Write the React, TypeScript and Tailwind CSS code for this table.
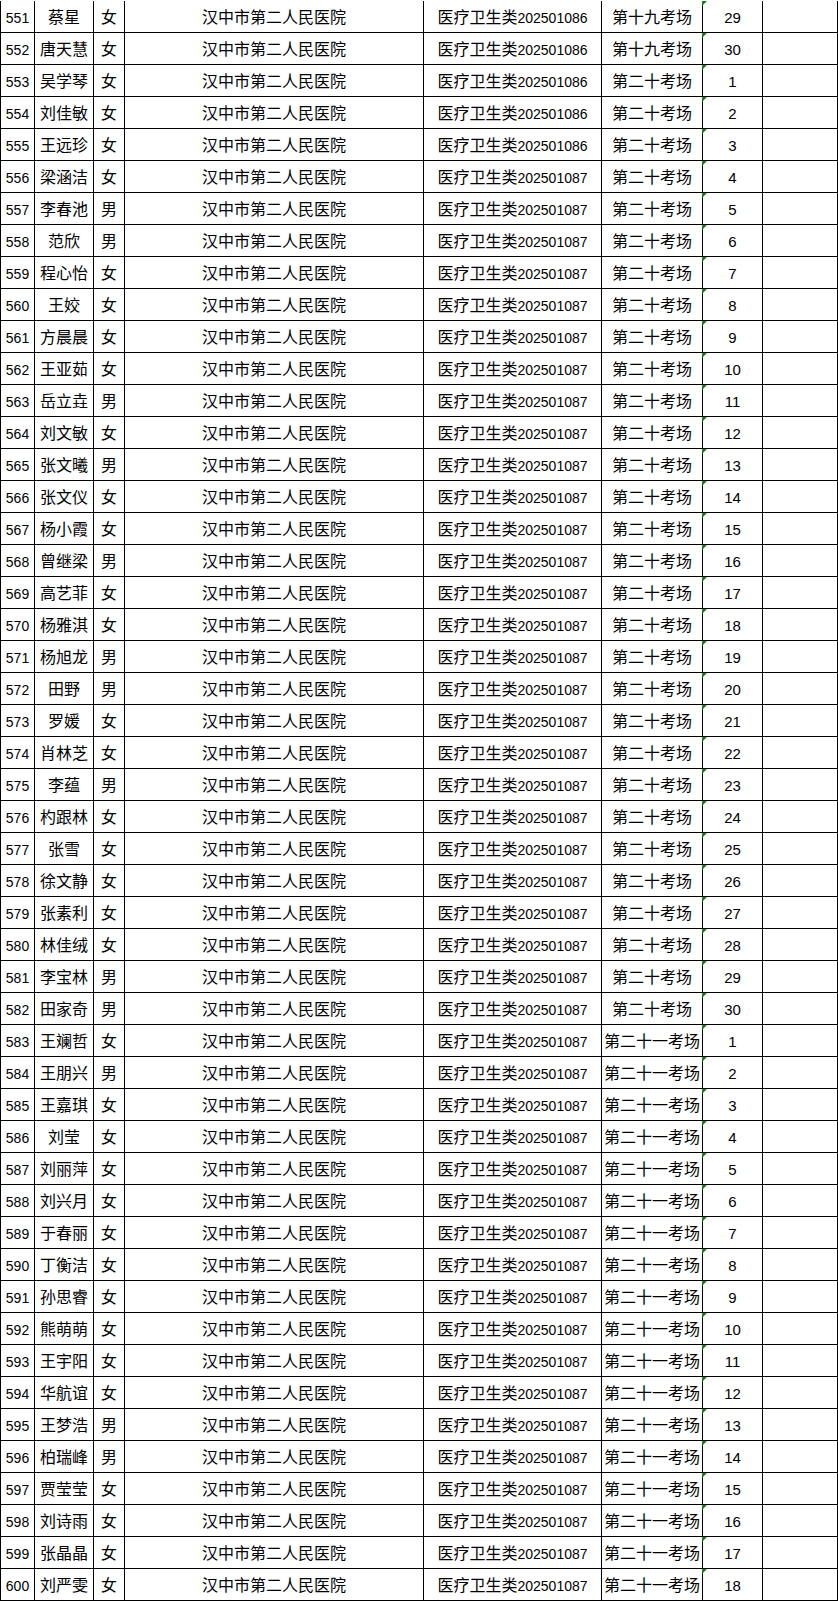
const rows: [number, string, string, string, string, number][] = [
  [551, "蔡星", "女", "202501086", "第十九考场", 29],
  [552, "唐天慧", "女", "202501086", "第十九考场", 30],
  [553, "吴学琴", "女", "202501086", "第二十考场", 1],
  [554, "刘佳敏", "女", "202501086", "第二十考场", 2],
  [555, "王远珍", "女", "202501086", "第二十考场", 3],
  [556, "梁涵洁", "女", "202501087", "第二十考场", 4],
  [557, "李春池", "男", "202501087", "第二十考场", 5],
  [558, "范欣", "男", "202501087", "第二十考场", 6],
  [559, "程心怡", "女", "202501087", "第二十考场", 7],
  [560, "王姣", "女", "202501087", "第二十考场", 8],
  [561, "方晨晨", "女", "202501087", "第二十考场", 9],
  [562, "王亚茹", "女", "202501087", "第二十考场", 10],
  [563, "岳立垚", "男", "202501087", "第二十考场", 11],
  [564, "刘文敏", "女", "202501087", "第二十考场", 12],
  [565, "张文曦", "男", "202501087", "第二十考场", 13],
  [566, "张文仪", "女", "202501087", "第二十考场", 14],
  [567, "杨小霞", "女", "202501087", "第二十考场", 15],
  [568, "曾继梁", "男", "202501087", "第二十考场", 16],
  [569, "高艺菲", "女", "202501087", "第二十考场", 17],
  [570, "杨雅淇", "女", "202501087", "第二十考场", 18],
  [571, "杨旭龙", "男", "202501087", "第二十考场", 19],
  [572, "田野", "男", "202501087", "第二十考场", 20],
  [573, "罗媛", "女", "202501087", "第二十考场", 21],
  [574, "肖林芝", "女", "202501087", "第二十考场", 22],
  [575, "李蕴", "男", "202501087", "第二十考场", 23],
  [576, "杓跟林", "女", "202501087", "第二十考场", 24],
  [577, "张雪", "女", "202501087", "第二十考场", 25],
  [578, "徐文静", "女", "202501087", "第二十考场", 26],
  [579, "张素利", "女", "202501087", "第二十考场", 27],
  [580, "林佳绒", "女", "202501087", "第二十考场", 28],
  [581, "李宝林", "男", "202501087", "第二十考场", 29],
  [582, "田家奇", "男", "202501087", "第二十考场", 30],
  [583, "王斓哲", "女", "202501087", "第二十一考场", 1],
  [584, "王朋兴", "男", "202501087", "第二十一考场", 2],
  [585, "王嘉琪", "女", "202501087", "第二十一考场", 3],
  [586, "刘莹", "女", "202501087", "第二十一考场", 4],
  [587, "刘丽萍", "女", "202501087", "第二十一考场", 5],
  [588, "刘兴月", "女", "202501087", "第二十一考场", 6],
  [589, "于春丽", "女", "202501087", "第二十一考场", 7],
  [590, "丁衡洁", "女", "202501087", "第二十一考场", 8],
  [591, "孙思睿", "女", "202501087", "第二十一考场", 9],
  [592, "熊萌萌", "女", "202501087", "第二十一考场", 10],
  [593, "王宇阳", "女", "202501087", "第二十一考场", 11],
  [594, "华航谊", "女", "202501087", "第二十一考场", 12],
  [595, "王梦浩", "男", "202501087", "第二十一考场", 13],
  [596, "柏瑞峰", "男", "202501087", "第二十一考场", 14],
  [597, "贾莹莹", "女", "202501087", "第二十一考场", 15],
  [598, "刘诗雨", "女", "202501087", "第二十一考场", 16],
  [599, "张晶晶", "女", "202501087", "第二十一考场", 17],
  [600, "刘严雯", "女", "202501087", "第二十一考场", 18],
];

export default function App() {
  return (
    <div
      className="w-[838px] bg-white pt-px text-black text-[16px] leading-none"
      style={{ fontFamily: '"Liberation Sans", "Noto Sans CJK SC", sans-serif' }}
    >
      <div className="border-l border-black">
        {rows.map(([no, name, sex, code, room, seat]) => (
          <div
            key={no}
            className="grid grid-cols-[34px_59px_31px_299px_178px_101px_60px_75px] h-[32px] border-b border-black"
          >
            {/* 序号 */}
            <div className="flex items-center justify-center pt-[2px] border-r border-black text-[14px]">
              {no}
            </div>
            {/* 姓名 */}
            <div className="flex items-center justify-center pt-[2px] border-r border-black whitespace-nowrap">
              {name}
            </div>
            {/* 性别 */}
            <div className="flex items-center justify-center pt-[2px] border-r border-black">
              {sex}
            </div>
            {/* 单位 */}
            <div className="flex items-center justify-center pt-[2px] border-r border-black">
              汉中市第二人民医院
            </div>
            {/* 岗位 */}
            <div className="flex items-center justify-center pt-[2px] border-r border-black whitespace-nowrap">
              医疗卫生类<span className="text-[14px]">{code}</span>
            </div>
            {/* 考场 */}
            <div className="flex items-center justify-center pt-[2px] border-r border-black whitespace-nowrap overflow-hidden">
              {room}
            </div>
            {/* 座号 */}
            <div className="relative flex items-center justify-center pt-[2px] border-r border-black text-[15px]">
              <span className="absolute -left-px top-0 w-0 h-0 border-t-[5px] border-r-[5px] border-t-[#1e7d1e] border-r-transparent" />
              {seat}
            </div>
            <div className="border-r border-black" />
          </div>
        ))}
      </div>
    </div>
  );
}
